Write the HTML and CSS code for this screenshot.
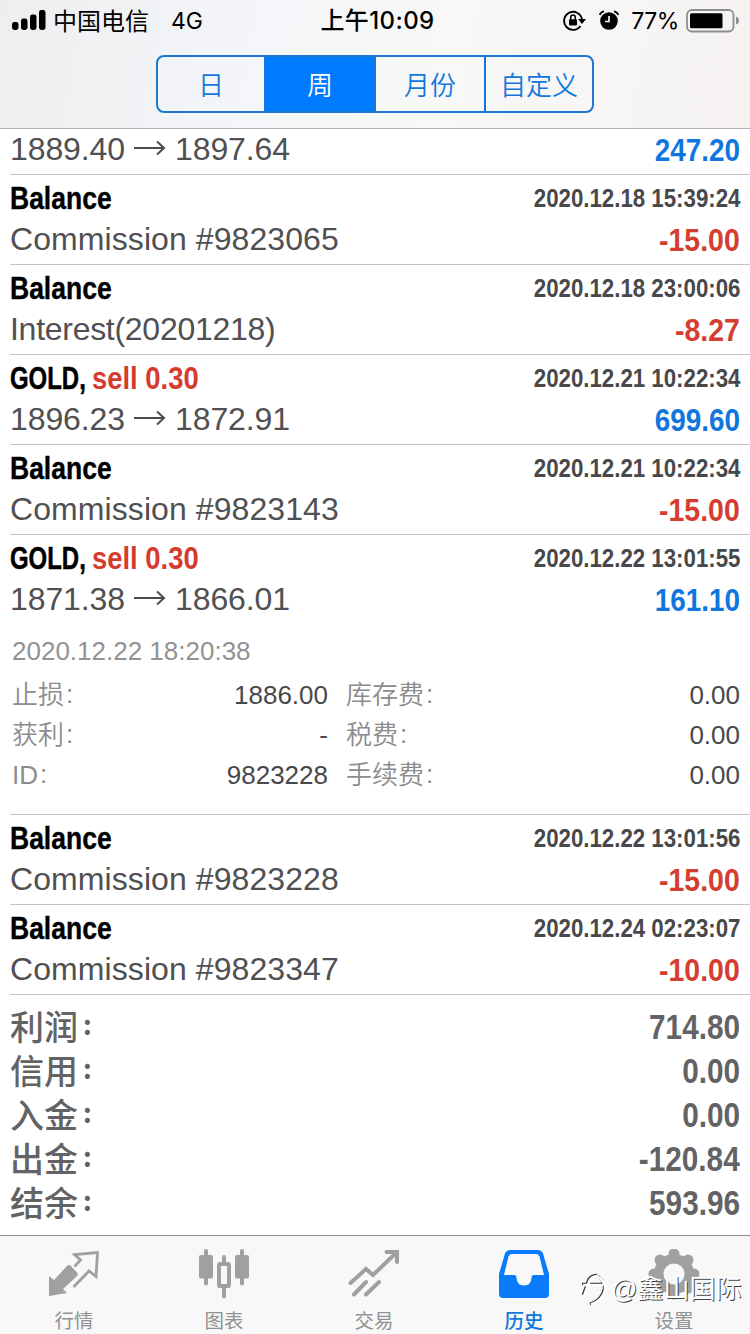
FILE: index.html
```html
<!DOCTYPE html>
<html lang="zh-CN">
<head>
<meta charset="utf-8">
<title>历史</title>
<link rel="stylesheet" href="styles.css">
</head>
<body>
<div class="app">
  <header class="header">
    <div class="status">
      <div class="status-left">
        <svg class="signal" width="34" height="21" viewBox="0 0 34 21"><rect x="0" y="12" width="6.5" height="8" rx="2.4"/><rect x="9" y="8.500" width="6.500" height="11.500" rx="2.400"/><rect x="18" y="4.500" width="6.500" height="15.500" rx="2.400"/><rect x="27" y="0" width="6.500" height="20" rx="2.400"/></svg>
        <span class="carrier">中国电信</span><span class="network">4G</span>
      </div>
      <div class="clock">上午10:09</div>
      <div class="status-right">
        <svg class="lock" width="24" height="22" viewBox="0 0 24 22" fill="none" stroke="#000"><path d="M17.500 16A9 9 0 1 1 19 9.500" stroke-width="1.900"/><path d="M15 9h8l-4 5z" fill="#000" stroke="none"/><rect x="6" y="9.200" width="8" height="6.300" rx="1" fill="#000" stroke="none"/><path d="M7.700 10V7.200a2.300 2.300 0 0 1 4.600 0V10" stroke-width="1.500"/></svg>
        <svg class="alarm" width="20" height="21" viewBox="0 0 20 21"><circle cx="10" cy="11" r="8.800"/><path d="M10 6V11.500H6" fill="none" stroke="#f7f7f7" stroke-width="1.700"/><path d="M.8 5Q1.500 2 5 1.300M19.200 5Q18.500 2 15 1.300" fill="none" stroke="#000" stroke-width="1.800"/></svg>
        <span class="percent">77%</span>
        <svg class="battery" width="54" height="24" viewBox="0 0 54 24"><rect x="1" y="1" width="46.500" height="21.500" rx="5" fill="none" stroke="#8e8e90" stroke-width="1.800"/><rect x="4" y="4.200" width="32.500" height="15" rx="1.500"/><path d="M50 7.500q3 1 3 4t-3 4z" fill="#8e8e90"/></svg>
      </div>
    </div>
    <div class="segments"><span class="seg">日</span><span class="seg active">周</span><span class="seg">月份</span><span class="seg">自定义</span></div>
  </header>

  <main class="list">
    <section class="row clipped">
      <div class="line"><span class="text">1889.40<svg class="arrow" viewBox="0 0 32 16"><path d="M0 8H30M23 1.500L30 8L23 14.500"/></svg>1897.64</span><span class="amount blue">247.20</span></div>
    </section>
    <section class="row">
      <div class="line"><span class="name">Balance</span><span class="date">2020.12.18 15:39:24</span></div>
      <div class="line"><span class="text commission">Commission #9823065</span><span class="amount red">-15.00</span></div>
    </section>
    <section class="row">
      <div class="line"><span class="name">Balance</span><span class="date">2020.12.18 23:00:06</span></div>
      <div class="line"><span class="text interest">Interest(20201218)</span><span class="amount red">-8.27</span></div>
    </section>
    <section class="row">
      <div class="line"><div class="deal"><span class="symbol">GOLD,</span><span class="side">sell 0.30</span></div><span class="date">2020.12.21 10:22:34</span></div>
      <div class="line"><span class="text">1896.23<svg class="arrow" viewBox="0 0 32 16"><path d="M0 8H30M23 1.500L30 8L23 14.500"/></svg>1872.91</span><span class="amount blue">699.60</span></div>
    </section>
    <section class="row">
      <div class="line"><span class="name">Balance</span><span class="date">2020.12.21 10:22:34</span></div>
      <div class="line"><span class="text commission">Commission #9823143</span><span class="amount red">-15.00</span></div>
    </section>
    <section class="row expanded">
      <div class="line"><div class="deal"><span class="symbol">GOLD,</span><span class="side">sell 0.30</span></div><span class="date">2020.12.22 13:01:55</span></div>
      <div class="line"><span class="text">1871.38<svg class="arrow" viewBox="0 0 32 16"><path d="M0 8H30M23 1.500L30 8L23 14.500"/></svg>1866.01</span><span class="amount blue">161.10</span></div>
      <div class="details">
        <div class="close-time">2020.12.22 18:20:38</div>
        <div class="fields">
          <span class="label">止损<i class="colon">:</i></span><span class="value">1886.00</span><span class="label">库存费<i class="colon">:</i></span><span class="value">0.00</span>
          <span class="label">获利<i class="colon">:</i></span><span class="value">-</span><span class="label">税费<i class="colon">:</i></span><span class="value">0.00</span>
          <span class="label">ID<i class="colon">:</i></span><span class="value">9823228</span><span class="label">手续费<i class="colon">:</i></span><span class="value">0.00</span>
        </div>
      </div>
    </section>
    <section class="row">
      <div class="line"><span class="name">Balance</span><span class="date">2020.12.22 13:01:56</span></div>
      <div class="line"><span class="text commission">Commission #9823228</span><span class="amount red">-15.00</span></div>
    </section>
    <section class="row">
      <div class="line"><span class="name">Balance</span><span class="date">2020.12.24 02:23:07</span></div>
      <div class="line"><span class="text commission">Commission #9823347</span><span class="amount red">-10.00</span></div>
    </section>
    <section class="summary">
      <div class="total"><span class="total-label">利润<i class="total-colon">:</i></span><span class="total-value">714.80</span></div>
      <div class="total"><span class="total-label">信用<i class="total-colon">:</i></span><span class="total-value">0.00</span></div>
      <div class="total"><span class="total-label">入金<i class="total-colon">:</i></span><span class="total-value">0.00</span></div>
      <div class="total"><span class="total-label">出金<i class="total-colon">:</i></span><span class="total-value">-120.84</span></div>
      <div class="total"><span class="total-label">结余<i class="total-colon">:</i></span><span class="total-value">593.96</span></div>
    </section>
  </main>

  <nav class="tabs">
    <div class="tab"><svg class="icon" viewBox="0 0 52 52"><path d="M1 27L6 31L19 17Q21 15 23 17L29 23.500Q30.500 25 29 27L15 40L19 44L1 47Z" fill="#a0a0a0"/><path d="M25.500 38L41 22L48 27.500L49.500 3.500L26.500 5.500L32.500 11L26.500 17.500" fill="none" stroke="#a0a0a0" stroke-width="2.800"/></svg><span>行情</span></div>
    <div class="tab"><svg class="icon" viewBox="0 0 52 52" fill="#a0a0a0"><rect x="1" y="6" width="14" height="23.500" rx="2"/><rect x="6" y="0" width="4" height="36.500" rx="2"/><rect x="37" y="6" width="14" height="23.500" rx="2"/><rect x="42" y="0" width="4" height="36.500" rx="2"/><rect x="24" y="6" width="4" height="10" rx="2"/><rect x="24" y="36" width="4" height="13.500" rx="2"/><rect x="21" y="15" width="10" height="22" rx="1" fill="none" stroke="#a0a0a0" stroke-width="4"/></svg><span>图表</span></div>
    <div class="tab"><svg class="icon" viewBox="0 0 52 52" fill="none" stroke="#a0a0a0" stroke-width="4" stroke-linecap="round"><path d="M2.500 34L18 20L25 26L48 4M38.500 3H49V13M6 45.500L18 33M18 45.500L31 33"/></svg><span>交易</span></div>
    <div class="tab selected"><svg class="icon" viewBox="0 0 52 52"><path d="M12 1H40Q43.500 1 45 4.500L51 25V45Q51 49 47 49H5Q1 49 1 45V25L7 4.500Q8.500 1 12 1Z" fill="#097bfb"/><path d="M13.500 5H38.500Q40.500 5 41.500 7.500L46 26H36Q33.500 26 33.500 29Q33 36.500 26 36.500Q19 36.500 18.500 29Q18.500 26 16 26H6L10.500 7.500Q11.500 5 13.500 5Z" fill="#f8f8f8"/></svg><span>历史</span></div>
    <div class="tab"><svg class="icon" viewBox="0 0 52 52"><g fill="#a0a0a0"><circle cx="26" cy="25" r="20"/><circle cx="26" cy="5" r="5.500"/><circle cx="40" cy="11" r="5.500"/><circle cx="46" cy="25" r="5.500"/><circle cx="40" cy="39" r="5.500"/><circle cx="26" cy="45" r="5.500"/><circle cx="12" cy="39" r="5.500"/><circle cx="6" cy="25" r="5.500"/><circle cx="12" cy="11" r="5.500"/></g><circle cx="26" cy="25" r="10.500" fill="#f8f8f8"/></svg><span>设置</span></div>
    <div class="watermark"><svg class="mark" viewBox="0 0 28 34" fill="none"><path d="M3 23L8 9Q10 3 17 3M2 12H22M15 3Q25 7 24 17Q22 28 10 32" stroke="#333" stroke-width="2.600"/><path d="M4 24L9 10Q11 4 18 4M3 13H23M16 4Q26 8 25 18Q23 28 11 32.500" stroke="#fff" stroke-width="2.600"/></svg><span>@鑫山国际</span></div>
  </nav>
</div>
</body>
</html>
```
FILE: styles.css
```css
* { box-sizing: border-box; }
body { margin: 0; background: #fff; }
.app {
  width: 750px; height: 1334px; display: flex; flex-direction: column; overflow: hidden;
  font-family: "Liberation Sans", "Noto Sans CJK SC", sans-serif; background: #fff;
}
.header {
  height: 129px; flex: none; border-bottom: 1px solid #b2b2b2;
  background: linear-gradient(100deg, #eeeeef 0%, #f3f5f8 30%, #f8f8f8 60%, #f6f2f2 100%);
}
.status { height: 55px; padding: 0 10px 14px 12px; display: grid; grid-template-columns: 1fr auto 1fr; align-items: center; }
.status-left, .status-right { display: flex; align-items: center; }
.status-right { justify-content: flex-end; }
.carrier { font: 24px/38px "Noto Sans CJK SC", sans-serif; margin-left: 7px; padding-bottom: 2px; }
.network { font: 23px/40px Inter, sans-serif; margin-left: 22px; }
.clock { font: 500 24px/40px Inter, "Noto Sans CJK SC", sans-serif; letter-spacing: .4px; padding-left: 3px; }
.lock { margin-right: 12px; }
.alarm { margin-right: 12px; }
.percent { font: 23px/40px Inter, sans-serif; letter-spacing: -.4px; margin-right: 7px; }
.segments {
  width: 438px; height: 58px; margin-left: 156px; display: grid; grid-template-columns: 106px 110px 110px 1fr;
  border: 2px solid #1c78cf; border-radius: 8px; overflow: hidden;
}
.seg { font: 350 26px/53px "Noto Sans CJK SC", sans-serif; color: #1277dc; text-align: center; border-left: 2px solid #1277dc; }
.seg:first-child { border-left: 0; }
.seg.active { background: #007aff; color: #fff; }

.list { flex: 1; min-height: 0; }
.row { height: 90px; margin-left: 10px; padding: 3px 10px 0 0; border-bottom: 1px solid #c4c4c6; }
.row.clipped { height: 46px; padding-top: 0; }
.row.expanded { height: 280px; }
.line { height: 41px; line-height: 40px; display: flex; justify-content: space-between; white-space: nowrap; }
.text { font-size: 32px; color: #505052; letter-spacing: -.1px; }
.commission { letter-spacing: .08px; }
.interest { letter-spacing: -.28px; }
.arrow { width: 32px; height: 16px; margin: 0 9px; vertical-align: 4px; fill: none; stroke: #4c4c4e; stroke-width: 2; }
.name, .symbol, .side { font-size: 32px; font-weight: 700; transform-origin: left; }
.name { color: #000; transform: scaleX(.828); -webkit-text-stroke: .4px #000; }
.deal { display: flex; }
.symbol { width: 82px; transform: scaleX(.748); -webkit-text-stroke: .5px #000; }
.side { color: #d63c2e; transform: scaleX(.856); }
.date { font-size: 26px; font-weight: 700; color: #48484a; transform: scaleX(.856); transform-origin: right; }
.amount { font-size: 32px; line-height: 42px; font-weight: 700; transform: scaleX(.87); transform-origin: right; }
.amount.blue { color: #0f76e0; }
.amount.red { color: #d43d2f; transform: scaleX(.89); }
.details { padding: 11px 0 0 2px; font-size: 26px; line-height: 40px; color: #929294; }
.close-time { margin-bottom: 4px; height: 40px; }
.fields { display: grid; grid-template-columns: 100px 216px 118px 1fr; grid-auto-rows: 40px; }
.label { font-weight: 350; color: #8c8c8e; }
.label:nth-child(4n+3) { padding-left: 18px; white-space: nowrap; }
.value { text-align: right; color: #48484a; }
.colon { font-style: normal; margin-left: 2px; position: relative; top: -1px; }

.summary { padding: 10px 10px 0; }
.total { height: 44px; line-height: 44px; display: flex; justify-content: space-between; color: #636365; }
.total-label { font: 500 34px/42px "Noto Sans CJK SC", sans-serif; }
.total-colon { font: 700 27px/30px "Noto Sans CJK SC", sans-serif; margin-left: 5px; position: relative; top: -5px; }
.total-value { font-size: 35px; font-weight: 700; transform: scaleX(.85); transform-origin: right; }

.tabs { height: 99px; flex: none; display: grid; grid-template-columns: repeat(5, 150px); border-top: 1px solid #8d8d8f; background: #f8f8f8; position: relative; }
.tab { padding: 13px 2px 0 0; display: flex; flex-direction: column; align-items: center; color: #929292; }
.tab span { font: 19.500px/30px "Noto Sans CJK SC", sans-serif; margin-top: 4px; }
.tab.selected { color: #1277dc; }
.tab.selected span { font-weight: 500; }
.icon { width: 52px; height: 52px; }
.watermark { position: absolute; left: 580px; top: 36px; display: flex; align-items: center; color: #fff; font: 26px/34px "Liberation Sans", "Noto Sans CJK SC", sans-serif; text-shadow: 1px 1px .5px #444; }
.mark { width: 28px; height: 34px; margin-right: 3px; }
```
